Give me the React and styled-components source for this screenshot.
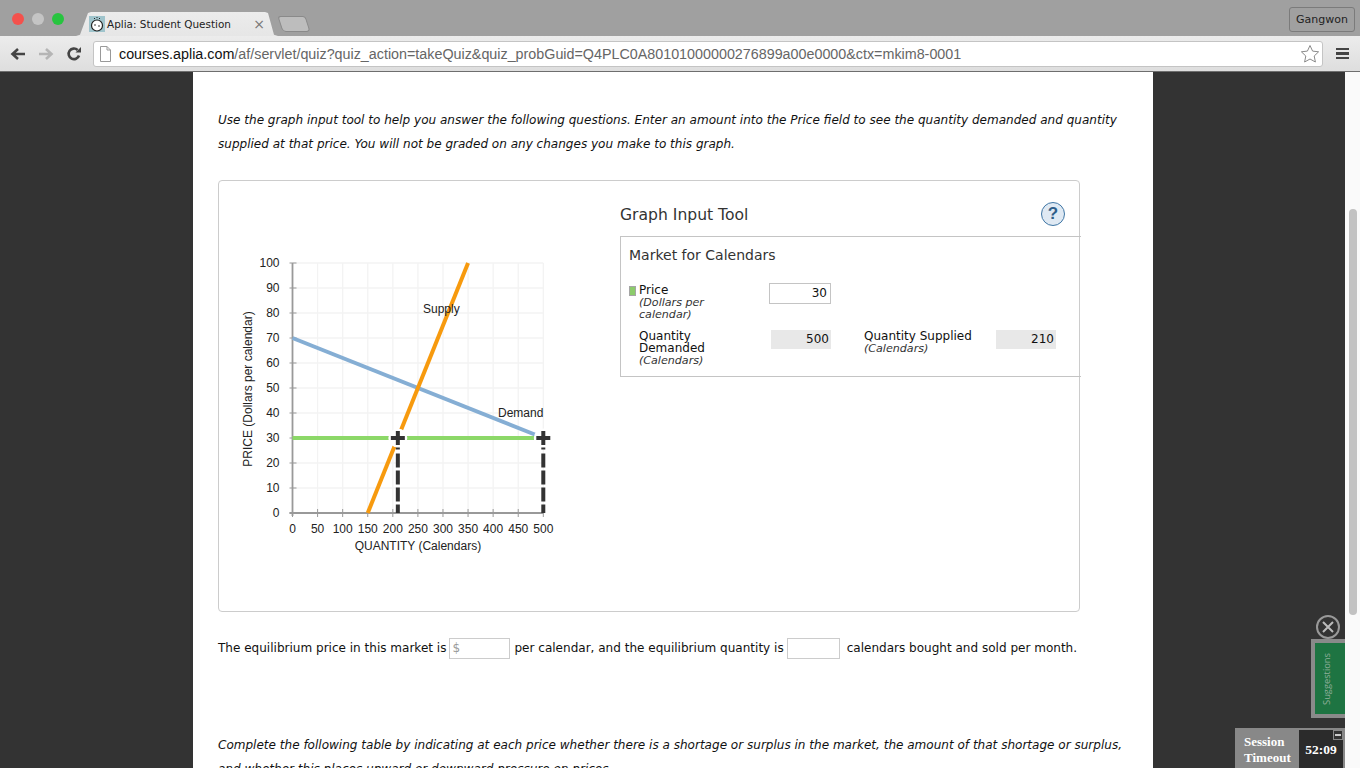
import React from "react";
import styled, { createGlobalStyle } from "styled-components";

const Global = createGlobalStyle`
  html, body {
    margin: 0;
    padding: 0;
    height: 100%;
    overflow: hidden;
    background: #333;
  }
`;

const Window = styled.div`
  width: 1360px;
  height: 768px;
  display: flex;
  flex-direction: column;
  overflow: hidden;
  position: relative;
  font-family: "DejaVu Sans", Verdana, sans-serif;
`;

/* browser chrome */
const TabBar = styled.div`
  height: 36px;
  flex: none;
  background: #a0a0a0;
  display: flex;
  align-items: flex-end;
  padding-left: 12px;
`;

const Lights = styled.div`
  display: flex;
  gap: 8px;
  align-self: flex-start;
  margin-top: 13px;
  margin-right: 12px;
`;

const Light = styled.span`
  width: 12px;
  height: 12px;
  border-radius: 50%;
  background: ${(p) => p.$color};
`;

const Tab = styled.div`
  width: 202px;
  height: 24px;
  background: linear-gradient(#ececec, #e6e6e6);
  clip-path: polygon(0 100%, 4px 95%, 12px 4%, 15px 0, 189px 0, 192px 4%, 198px 95%, 202px 100%);
  display: flex;
  align-items: center;
  padding-left: 13px;
  box-sizing: border-box;
  font: 10.45px/1 "DejaVu Sans", sans-serif;
  white-space: nowrap;
  color: #222;
`;

const Favicon = styled.svg`
  width: 16px;
  height: 16px;
  flex: none;
  margin-right: 2px;
`;

const TabClose = styled.span`
  margin-left: auto;
  margin-right: 13px;
  font-size: 14px;
  color: #777;
`;

const NewTab = styled.div`
  width: 26px;
  height: 14px;
  margin: 0 0 4px 2px;
  background: #bdbdbd;
  border: 1px solid #8a8a8a;
  border-radius: 3px 3px 4px 4px;
  transform: skewX(18deg);
`;

const UserButton = styled.div`
  margin-left: auto;
  margin-right: 5px;
  align-self: flex-start;
  margin-top: 7px;
  height: 25px;
  width: 66px;
  box-sizing: border-box;
  border: 1px solid #7b7b7b;
  border-radius: 3px;
  display: flex;
  align-items: center;
  justify-content: center;
  font: 11px "DejaVu Sans", sans-serif;
  color: #222;
`;

const Toolbar = styled.div`
  height: 36px;
  flex: none;
  box-sizing: border-box;
  background: linear-gradient(#ececec, #dedede);
  border-bottom: 1px solid #6e6e6e;
  display: flex;
  align-items: center;
  padding: 0 11px 0 10px;
`;

const NavIcon = styled.svg`
  width: 16px;
  height: 16px;
  flex: none;
  margin-right: ${(p) => p.$gap}px;
`;

const UrlBox = styled.div`
  flex: 1;
  height: 26px;
  box-sizing: border-box;
  background: #fff;
  border: 1px solid #c4c4c4;
  border-radius: 3px;
  display: flex;
  align-items: center;
  padding: 0 2px 0 6px;
  font: 14.32px "Liberation Sans", Arial, sans-serif;
  white-space: nowrap;
`;

const UrlHost = styled.span`
  color: #111;
`;

const UrlPath = styled.span`
  color: #666;
`;

const PageIcon = styled.svg`
  width: 11px;
  height: 16px;
  margin-right: 8px;
  flex: none;
`;

const StarIcon = styled.svg`
  width: 20px;
  height: 20px;
  margin-left: auto;
`;

const MenuIcon = styled.div`
  margin-left: 13px;
  width: 13px;
  height: 11px;
  background: repeating-linear-gradient(#444 0 2.4px, transparent 2.4px 4.3px);
`;

/* page */
const Viewport = styled.div`
  flex: 1;
  display: flex;
  min-height: 0;
  background: #333;
`;

const Gutter = styled.div`
  background: #333;
  width: ${(p) => p.$w}px;
  flex: none;
`;

const Content = styled.main`
  width: 960px;
  flex: none;
  background: #fff;
  box-sizing: border-box;
  padding: 36px 0 0 25px;
  font-size: 12.04px;
  color: #111;
  overflow: hidden;
`;

const Instructions = styled.p`
  margin: 0;
  width: 910px;
  font-style: italic;
  line-height: 24px;
`;

const Panel = styled.section`
  margin-top: 24px;
  width: 862px;
  height: 432px;
  box-sizing: border-box;
  border: 1px solid #ccc;
  border-radius: 4px;
  display: flex;
`;

const ChartWrap = styled.div`
  width: 401px;
  flex: none;
`;

const Chart = styled.svg`
  display: block;
  width: 401px;
  height: 430px;
  font-family: "Liberation Sans", Arial, sans-serif;
  font-size: 12px;
`;

const Tool = styled.div`
  flex: 1;
  padding-top: 20px;
`;

const ToolHead = styled.div`
  display: flex;
  justify-content: space-between;
  align-items: center;
  height: 26px;
  padding-right: 16px;
  margin-bottom: 9px;
`;

const ToolTitle = styled.h2`
  margin: 0;
  padding-top: 2px;
  font-size: 15.6px;
  font-weight: 400;
  color: #333;
`;

const Help = styled.span`
  width: 24px;
  height: 24px;
  box-sizing: border-box;
  border: 1.5px solid #3f76a5;
  border-radius: 50%;
  background: #dfe9f3;
  color: #2f5f8a;
  display: flex;
  align-items: center;
  justify-content: center;
  font: 700 17px "Liberation Sans", Arial, sans-serif;
`;

const Market = styled.div`
  width: 461px;
  height: 141px;
  box-sizing: border-box;
  border: 1px solid #c4c4c4;
  border-right: none;
  padding: 9px 0 0 8px;
`;

const MarketTitle = styled.h3`
  margin: 0 0 20px;
  font-size: 14px;
  line-height: 18px;
  font-weight: 400;
  color: #333;
`;

const Grid = styled.div`
  display: grid;
  grid-template-columns: 140px 62px 33px 130px 60px;
  row-gap: 9px;
  font-size: 12px;
  line-height: 12px;
`;

const Label = styled.div`
  position: relative;
  padding-left: 10px;
  ${(p) => p.$wide && "padding-left: 0;"}
`;

const Swatch = styled.i`
  position: absolute;
  left: 0;
  top: 2px;
  width: 7px;
  height: 10px;
  background: #8ccb6b;
  border: 1px solid #a5a5a5;
  box-sizing: border-box;
`;

const Unit = styled.em`
  display: block;
  margin-top: 1px;
  font-size: 11.1px;
  color: #333;
`;

const PriceInput = styled.div`
  width: 62px;
  height: 21px;
  margin-top: -1px;
  box-sizing: border-box;
  border: 1px solid #c4c4c4;
  text-align: right;
  padding-right: 3px;
  font-size: 12px;
  line-height: 19px;
`;

const Output = styled.div`
  width: 60px;
  height: 19px;
  margin-left: 2px;
  background: #e8e8e8;
  text-align: right;
  padding-right: 2px;
  box-sizing: border-box;
  font-size: 12px;
  line-height: 19px;
`;

const Spacer = styled.div`
  grid-column: span 3;
`;

const Question = styled.div`
  margin-top: 25px;
  height: 22px;
  display: flex;
  align-items: center;
  white-space: pre;
`;

const Blank = styled.span`
  width: ${(p) => p.$w}px;
  height: 21px;
  box-sizing: border-box;
  border: 1px solid #ccc;
  margin: ${(p) => p.$m};
  padding-left: 2px;
  color: #999;
  line-height: 19px;
`;

const Followup = styled.p`
  margin: 74px 0 0;
  width: 910px;
  font-style: italic;
  line-height: 24px;
`;

const Scrollbar = styled.div`
  width: 15px;
  flex: none;
  background: #fafafa;
  box-sizing: border-box;
  padding: 137px 3px 0 4px;
`;

const Thumb = styled.div`
  height: 406px;
  background: #c2c2c2;
  border-radius: 4px;
`;

/* floating widgets */
const Dismiss = styled.div`
  position: absolute;
  left: 1316px;
  top: 615px;
  width: 24px;
  height: 24px;
  box-sizing: border-box;
  border: 2px solid #999;
  border-radius: 50%;
  display: flex;
  align-items: center;
  justify-content: center;
`;

const Suggestions = styled.div`
  position: absolute;
  left: 1311px;
  top: 639px;
  width: 34px;
  height: 79px;
  box-sizing: border-box;
  background: #1e7442;
  border: 4px solid #8a8a8a;
  border-right: none;
  padding-right: 7px;
  display: flex;
  align-items: center;
  justify-content: center;
`;

const SuggestionsText = styled.span`
  writing-mode: vertical-rl;
  transform: rotate(180deg);
  font: 9.3px "Open Sans", sans-serif;
  color: #8fae9a;
`;

const Session = styled.div`
  position: absolute;
  left: 1235px;
  top: 728px;
  width: 110px;
  height: 40px;
  background: #888;
  display: flex;
  justify-content: flex-end;
`;

const SessionLabel = styled.div`
  flex: 1;
  padding: 6px 0 0 9px;
  font: 700 13px/16px "Liberation Serif", serif;
  color: #fff;
`;

const Clock = styled.div`
  position: relative;
  width: 44px;
  margin-right: 2px;
  margin-top: 2px;
  background: #2b2b2b;
  color: #fff;
  font: 700 13.5px/40px "Liberation Serif", serif;
  text-align: center;
`;

const Minimize = styled.span`
  position: absolute;
  right: 0;
  top: 0;
  width: 10px;
  height: 10px;
  box-sizing: border-box;
  border: 1px solid #888;
  background: #333;
  &::after {
    content: "";
    position: absolute;
    left: 1px;
    right: 1px;
    top: 3px;
    height: 2px;
    background: #ccc;
  }
`;

const X0 = 73.5;
const Y0 = 332;
const xs = (q) => X0 + q * 0.5016;
const ys = (p) => Y0 - p * 2.5;

const PriceChart = () => {
  const quantities = [0, 50, 100, 150, 200, 250, 300, 350, 400, 450, 500];
  const prices = [0, 10, 20, 30, 40, 50, 60, 70, 80, 90, 100];
  return (
    <Chart viewBox="0 0 401 430">
      {quantities.slice(1).map((q) => (
        <line key={q} x1={xs(q)} x2={xs(q)} y1={ys(100)} y2={ys(0)} stroke="#f3f3f3" strokeWidth="1.3" />
      ))}
      {prices.slice(1).map((p) => (
        <line key={p} x1={xs(0)} x2={xs(500)} y1={ys(p)} y2={ys(p)} stroke="#f3f3f3" strokeWidth="1.3" />
      ))}
      <line x1={xs(0)} x2={xs(0)} y1={ys(100)} y2={ys(0) + 3} stroke="#999" strokeWidth="1.8" />
      <line x1={xs(0) - 3} x2={xs(500)} y1={ys(0)} y2={ys(0)} stroke="#999" strokeWidth="1.8" />
      {quantities.map((q) => (
        <line key={q} x1={xs(q)} x2={xs(q)} y1={ys(0) - 4} y2={ys(0) + 4} stroke="#999" />
      ))}
      {prices.map((p) => (
        <line key={p} x1={xs(0) - 3} x2={xs(0) + 4} y1={ys(p)} y2={ys(p)} stroke="#999" />
      ))}
      {prices.map((p) => (
        <text key={p} x={xs(0) - 13} y={ys(p) + 4} textAnchor="end" fill="#222">{p}</text>
      ))}
      {quantities.map((q) => (
        <text key={q} x={xs(q)} y={352} textAnchor="middle" fill="#222">{q}</text>
      ))}
      <text x={xs(250)} y={369} textAnchor="middle" fill="#222">QUANTITY (Calendars)</text>
      <text transform={`translate(33 ${ys(50) + 1}) rotate(-90)`} textAnchor="middle" fill="#222">PRICE (Dollars per calendar)</text>

      <line x1={xs(0)} y1={ys(70)} x2={xs(488)} y2={ys(31)} stroke="#85aed4" strokeWidth="4" />
      <line x1={xs(150)} y1={ys(0)} x2={xs(350)} y2={ys(100)} stroke="#f79a0e" strokeWidth="4" />
      <line x1={xs(0)} y1={ys(30)} x2={xs(482)} y2={ys(30)} stroke="#8cd868" strokeWidth="4" />

      <text x={204} y={132} fill="#222">Supply</text>
      <text x={279} y={236} fill="#222">Demand</text>

      {[210, 500].map((q) => (
        <g key={q} stroke="#333">
          <circle cx={xs(q)} cy={ys(30)} r="9.5" fill="#fff" stroke="none" />
          <line x1={xs(q) - 7} x2={xs(q) + 7} y1={ys(30)} y2={ys(30)} strokeWidth="4" />
          <line x1={xs(q)} x2={xs(q)} y1={ys(30) - 7} y2={ys(30) + 7} strokeWidth="4" />
          <line x1={xs(q)} x2={xs(q)} y1={ys(30) + 9.5} y2={ys(0)} strokeWidth="4" strokeDasharray="2 4 14 3 14 3 14 3 12" />
        </g>
      ))}
    </Chart>
  );
};

const App = () => (
  <Window>
    <Global />
    <TabBar>
      <Lights>
        <Light $color="#f4514c" />
        <Light $color="#c4c4c4" />
        <Light $color="#27c43f" />
      </Lights>
      <Tab>
        <Favicon viewBox="0 0 16 16">
          <rect width="16" height="16" fill="#9fc4cc" />
          <circle cx="8" cy="9.5" r="5.5" fill="#fff" stroke="#222" strokeWidth="1.2" />
          <circle cx="6" cy="9" r="0.8" fill="#222" />
          <circle cx="10" cy="10" r="0.8" fill="#222" />
          <path d="M5 2.5h1M7.5 1.5h1M10 2.5h1" stroke="#222" />
        </Favicon>
        Aplia: Student Question
        <TabClose>×</TabClose>
      </Tab>
      <NewTab />
      <UserButton>Gangwon</UserButton>
    </TabBar>
    <Toolbar>
      <NavIcon viewBox="0 0 16 16" $gap={12}>
        <path d="M15 8H3M8 3L2.5 8 8 13" fill="none" stroke="#444" strokeWidth="2.6" />
      </NavIcon>
      <NavIcon viewBox="0 0 16 16" $gap={12}>
        <path d="M1 8h12M8 3l5.5 5L8 13" fill="none" stroke="#b5b5b5" strokeWidth="2.6" />
      </NavIcon>
      <NavIcon viewBox="0 0 16 16" $gap={11}>
        <path d="M13 9.5A5.3 5.3 0 1 1 11.6 4" fill="none" stroke="#444" strokeWidth="2.6" />
        <path d="M9.5 6.5H15V1z" fill="#444" />
      </NavIcon>
      <UrlBox>
        <PageIcon viewBox="0 0 11 16">
          <path d="M.5 .5h6.5L10.5 4V15.5H.5z M7 .5V4h3.500" fill="#fff" stroke="#999" />
        </PageIcon>
        <UrlHost>courses.aplia.com</UrlHost>
        <UrlPath>/af/servlet/quiz?quiz_action=takeQuiz&amp;quiz_probGuid=Q4PLC0A80101000000276899a00e0000&amp;ctx=mkim8-0001</UrlPath>
        <StarIcon viewBox="0 0 20 20">
          <path d="M10 1.5l2.6 5.6 6 .7-4.4 4.2 1.2 6L10 15l-5.4 3 1.2-6L1.4 7.8l6-.7z" fill="#fff" stroke="#8a8a8a" />
        </StarIcon>
      </UrlBox>
      <MenuIcon />
    </Toolbar>
    <Viewport>
      <Gutter $w={193} />
      <Content>
        <Instructions>
          Use the graph input tool to help you answer the following questions. Enter an amount into the Price field to see the quantity demanded and quantity supplied at that price. You will not be graded on any changes you make to this graph.
        </Instructions>
        <Panel>
          <ChartWrap>
            <PriceChart />
          </ChartWrap>
          <Tool>
            <ToolHead>
              <ToolTitle>Graph Input Tool</ToolTitle>
              <Help>?</Help>
            </ToolHead>
            <Market>
              <MarketTitle>Market for Calendars</MarketTitle>
              <Grid>
                <Label>
                  <Swatch />
                  Price
                  <Unit>(Dollars per<br />calendar)</Unit>
                </Label>
                <PriceInput>30</PriceInput>
                <Spacer />
                <Label>
                  Quantity<br />Demanded
                  <Unit>(Calendars)</Unit>
                </Label>
                <Output>500</Output>
                <div />
                <Label $wide>
                  Quantity Supplied
                  <Unit>(Calendars)</Unit>
                </Label>
                <Output>210</Output>
              </Grid>
            </Market>
          </Tool>
        </Panel>
        <Question>
          The equilibrium price in this market is
          <Blank $w={61} $m="0 4px 0 3px">$</Blank>
          per calendar, and the equilibrium quantity is
          <Blank $w={53} $m="0 7px 0 3px" />
          calendars bought and sold per month.
        </Question>
        <Followup>
          Complete the following table by indicating at each price whether there is a shortage or surplus in the market, the amount of that shortage or surplus, and whether this places upward or downward pressure on prices.
        </Followup>
      </Content>
      <Gutter $w={192} />
      <Scrollbar>
        <Thumb />
      </Scrollbar>
    </Viewport>
    <Dismiss>
      <svg width="14" height="14" viewBox="0 0 14 14">
        <path d="M2 2l10 10M12 2L2 12" stroke="#bbb" strokeWidth="2" />
      </svg>
    </Dismiss>
    <Suggestions>
      <SuggestionsText>Suggestions</SuggestionsText>
    </Suggestions>
    <Session>
      <SessionLabel>Session<br />Timeout</SessionLabel>
      <Clock>
        52:09
        <Minimize />
      </Clock>
    </Session>
  </Window>
);

export default App;
